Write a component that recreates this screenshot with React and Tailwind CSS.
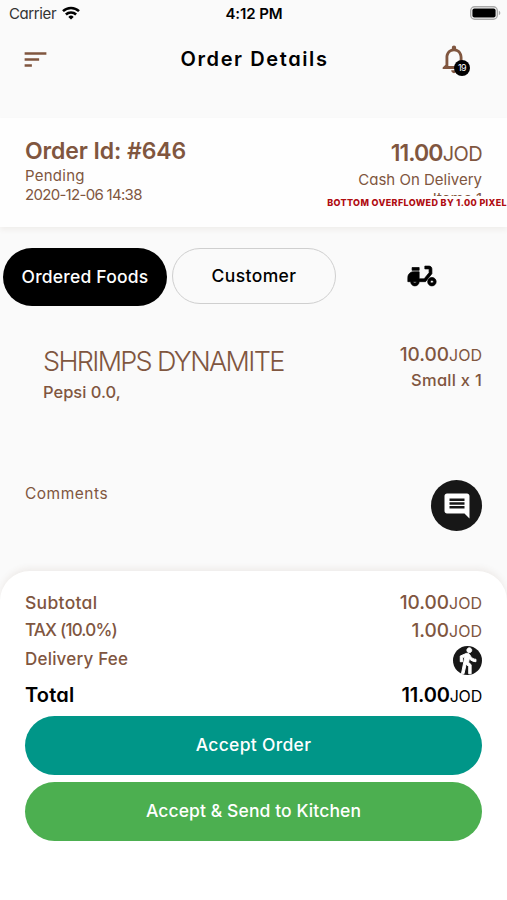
import { MdComment, MdDeliveryDining, MdDirectionsWalk, MdNotificationsNone, MdSort } from 'react-icons/md';

function StatusBar() {
  return (
    <div className="h-7 pl-[9px] pr-[6px] pb-[2px] grid grid-cols-3 items-center text-[15px] leading-none text-[#333]">
      <div className="flex items-center gap-[6px]">
        <span className="tracking-[-0.4px]">Carrier</span>
        <svg className="w-[18px] h-[14px]" viewBox="0 0 18 14" fill="none" stroke="#000" strokeWidth="2.5">
          <path d="M1 5.2a11.4 11.4 0 0 1 16 0" />
          <path d="M3.9 8.5a7.2 7.2 0 0 1 10.2 0" />
          <path d="M9 13.6 6.3 10.9a3.8 3.8 0 0 1 5.4 0z" fill="#000" stroke="none" />
        </svg>
      </div>
      <span className="pr-[2px] text-center font-semibold tracking-[-0.1px] text-black">4:12 PM</span>
      <svg className="justify-self-end w-[31px] h-[14px]" viewBox="0 0 31 14">
        <rect x=".7" y=".7" width="26.6" height="12.6" rx="4" fill="#fafafa" stroke="#a9a9a9" strokeWidth="1.4" />
        <rect x="2.4" y="2.4" width="23.2" height="9.2" rx="2" fill="#000" />
        <path d="M28.8 4.8c1 .4 1.5 1.2 1.5 2.2s-.5 1.8-1.5 2.2z" fill="#a9a9a9" />
      </svg>
    </div>
  );
}

function AppBar() {
  return (
    <header className="h-[62px] px-[21px] grid grid-cols-[1fr_auto_1fr] items-center">
      <MdSort className="w-[29px] h-[29px]" />
      <h1 className="pl-[2px] text-[20px] leading-none font-semibold tracking-[1.6px] text-black">Order Details</h1>
      <div className="relative justify-self-end mr-[15px]">
        <MdNotificationsNone className="w-[34px] h-[34px]" />
        <span className="absolute left-[17px] top-[18px] w-4 h-4 rounded-full bg-black text-white text-[9px] leading-[15px] text-center tracking-[-0.5px]">
          19
        </span>
      </div>
    </header>
  );
}

function OrderSummary() {
  return (
    <section className="mt-7 h-[109px] pl-[25px] bg-[#fefefe] shadow-[0_3px_5px_rgba(120,80,50,0.07)] flex justify-between">
      <div className="pt-[18px]">
        <h2 className="text-[23px] leading-[30px] font-semibold tracking-[-0.1px]">Order Id: #646</h2>
        <p className="text-[15px] leading-[19px] tracking-[0.25px]">Pending</p>
        <p className="text-[15px] leading-[20px] tracking-[-0.7px]">2020-12-06 14:38</p>
      </div>
      <div className="pt-5 flex flex-col items-end">
        <p className="pr-[25px] text-[20px] leading-[30px] tracking-[-0.6px]">
          <span className="text-[23px] font-semibold tracking-[-0.9px]">11.00</span>JOD
        </p>
        <p className="pr-[25px] text-[15px] leading-[22px]">Cash On Delivery</p>
        <p className="pr-[25px] h-[5px] overflow-hidden text-[15px] leading-[16px]">Items:1</p>
        <p className="pt-px text-[9px] leading-[12px] font-extrabold text-[#b00d12] tracking-[0.35px] whitespace-nowrap">
          BOTTOM OVERFLOWED BY 1.00 PIXEL
        </p>
      </div>
    </section>
  );
}

function Tabs() {
  return (
    <nav className="mt-[21px] pl-[3px] flex items-start gap-[5px] text-[17.5px] font-medium">
      <button className="w-[164px] h-[58px] rounded-full bg-black text-white tracking-[0.2px]">Ordered Foods</button>
      <button className="w-[164px] h-[56px] pt-px rounded-full border border-[#cfcfcf] text-black tracking-[0.4px]">
        Customer
      </button>
      <button className="flex-1 h-[56px] pr-1 flex items-center justify-center text-black">
        <MdDeliveryDining className="w-[34px] h-[34px] stroke-[0.5] [&>path[fill=none]]:stroke-none" />
      </button>
    </nav>
  );
}

function Amount({ value, className = 'text-[19px] font-medium' }) {
  return (
    <span className={className}>
      {value}
      <span className="text-[16px] font-normal">JOD</span>
    </span>
  );
}

function FoodItem() {
  return (
    <section className="mt-[38px] pl-[43px] pr-[25px] flex justify-between">
      <div>
        <h3 className="text-[27px] leading-[36px] font-light tracking-[-1.65px]">SHRIMPS DYNAMITE</h3>
        <p className="text-[16.5px] leading-6 font-medium">Pepsi 0.0,</p>
      </div>
      <div className="flex flex-col items-end">
        <Amount value="10.00" className="text-[19px] leading-[22px] font-medium" />
        <span className="pt-[2px] text-[16.5px] leading-6 font-medium tracking-[0.25px]">Small x 1</span>
      </div>
    </section>
  );
}

function Comments() {
  return (
    <section className="mt-[76px] px-[25px] flex justify-between">
      <span className="pt-1 text-[15.5px] leading-[19px] tracking-[0.5px]">Comments</span>
      <button className="w-[51px] h-[51px] rounded-full bg-[#171717] text-white flex items-center justify-center">
        <MdComment className="w-[30px] h-[30px]" />
      </button>
    </section>
  );
}

function Totals() {
  return (
    <section className="mt-10 flex-1 px-[25px] pt-[18px] rounded-t-[30px] bg-white shadow-[0_-3px_6px_rgba(120,80,50,0.08)]">
      <div className="text-[17px] font-medium">
        <div className="h-7 flex items-center justify-between">
          <span className="text-[17.5px] tracking-[0.3px]">Subtotal</span>
          <Amount value="10.00" />
        </div>
        <div className="h-7 flex items-center justify-between">
          <span className="tracking-[-0.8px]">TAX (10.0%)</span>
          <Amount value="1.00" />
        </div>
        <div className="h-[30px] flex items-center justify-between">
          <span className="tracking-[0.2px]">Delivery Fee</span>
          <span className="w-[29px] h-[29px] rounded-full bg-[#171717] text-white flex items-center justify-center">
            <MdDirectionsWalk className="w-[29px] h-[29px] stroke-[0.8] [&>path[fill=none]]:stroke-none" />
          </span>
        </div>
        <div className="h-[41px] pb-[2px] flex items-center justify-between text-black">
          <span className="pt-px text-[20px] font-semibold tracking-[0.2px]">Total</span>
          <Amount value="11.00" className="text-[20px] font-semibold tracking-[-0.2px]" />
        </div>
      </div>
      <div className="flex flex-col gap-[7px] text-[17.5px] font-medium text-white">
        <button className="h-[59px] rounded-full bg-[#009688] tracking-[0.3px]">Accept Order</button>
        <button className="h-[59px] rounded-full bg-[#4caf50] tracking-[0.1px]">Accept &amp; Send to Kitchen</button>
      </div>
    </section>
  );
}

export default function App() {
  return (
    <main className="w-[507px] h-[900px] overflow-hidden flex flex-col bg-[#fafafa] text-[#80563f] font-[Inter,sans-serif] [font-feature-settings:'cv11']">
      <StatusBar />
      <AppBar />
      <OrderSummary />
      <Tabs />
      <FoodItem />
      <Comments />
      <Totals />
    </main>
  );
}
